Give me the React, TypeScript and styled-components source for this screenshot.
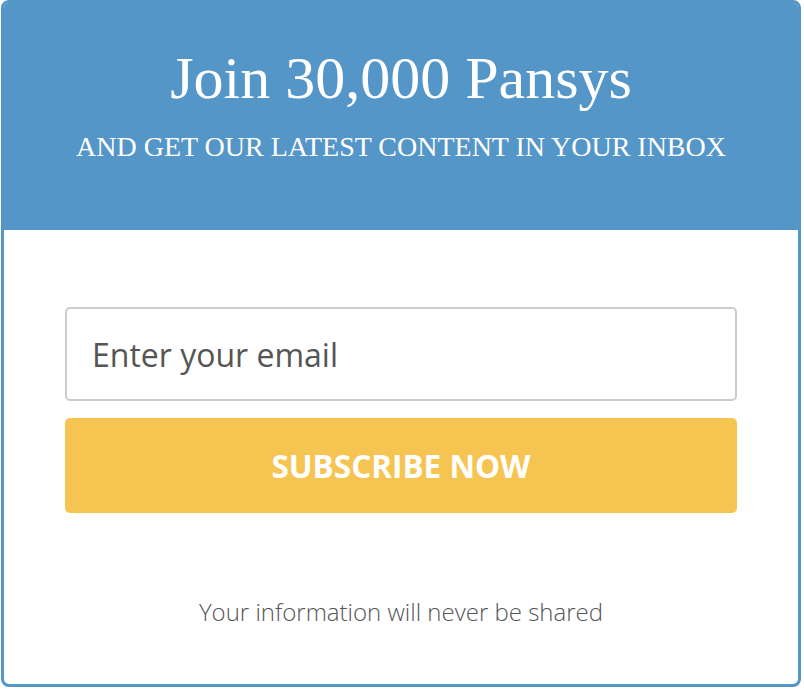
import styled, { createGlobalStyle } from 'styled-components';

const GlobalStyle = createGlobalStyle`
    html, body {
        margin: 0;
        padding: 0;
        background: #fff;
    }
`;

const Card = styled.div`
    box-sizing: border-box;
    width: 800px;
    height: 687px;
    margin-left: 1px;
    border: 3px solid #5596c8;
    border-radius: 8px;
    overflow: hidden;
    display: flex;
    flex-direction: column;
    background: #fff;
`;

const Header = styled.header`
    height: 227px;
    box-sizing: border-box;
    padding-top: 45px;
    background: #5596c8;
    color: #fff;
    text-align: center;
    font-family: "Liberation Serif", "Times New Roman", serif;
`;

const Title = styled.h1`
    margin: 0;
    font-size: 60px;
    font-weight: 400;
    line-height: 60px;
`;

const Subtitle = styled.p`
    margin: 25px 0 0;
    font-size: 28px;
    line-height: 28px;
    text-transform: uppercase;
`;

const Body = styled.div`
    display: flex;
    flex-direction: column;
    align-items: center;
    padding-top: 77px;
    font-family: "Open Sans", sans-serif;
`;

const Form = styled.form`
    width: 672px;
    display: flex;
    flex-direction: column;
    gap: 17px;
`;

const EmailInput = styled.input`
    box-sizing: border-box;
    width: 100%;
    height: 94px;
    padding: 0 25px;
    border: 2px solid #cccccc;
    border-radius: 5px;
    font-family: "Open Sans", sans-serif;
    font-size: 32px;
    color: #555;
    outline: none;

    &::placeholder {
        color: #555;
        opacity: 1;
    }
`;

const SubscribeButton = styled.button`
    height: 95px;
    border: none;
    border-radius: 5px;
    background: #f6c451;
    color: #fff;
    font-family: "Open Sans", sans-serif;
    font-size: 31.5px;
    font-weight: 700;
    text-transform: uppercase;
    cursor: pointer;
`;

const Note = styled.p`
    margin: 87px 0 0;
    font-size: 24px;
    line-height: 24px;
    font-weight: 300;
    color: #555;
`;

export default function App() {
    return (
        <>
            <GlobalStyle />
            <Card>
                <Header>
                    <Title>Join 30,000 Pansys</Title>
                    <Subtitle>And get our latest content in your inbox</Subtitle>
                </Header>
                <Body>
                    <Form onSubmit={(e) => e.preventDefault()}>
                        <EmailInput type='email' placeholder='Enter your email' />
                        <SubscribeButton type='submit'>Subscribe now</SubscribeButton>
                    </Form>
                    <Note>Your information will never be shared</Note>
                </Body>
            </Card>
        </>
    );
}
